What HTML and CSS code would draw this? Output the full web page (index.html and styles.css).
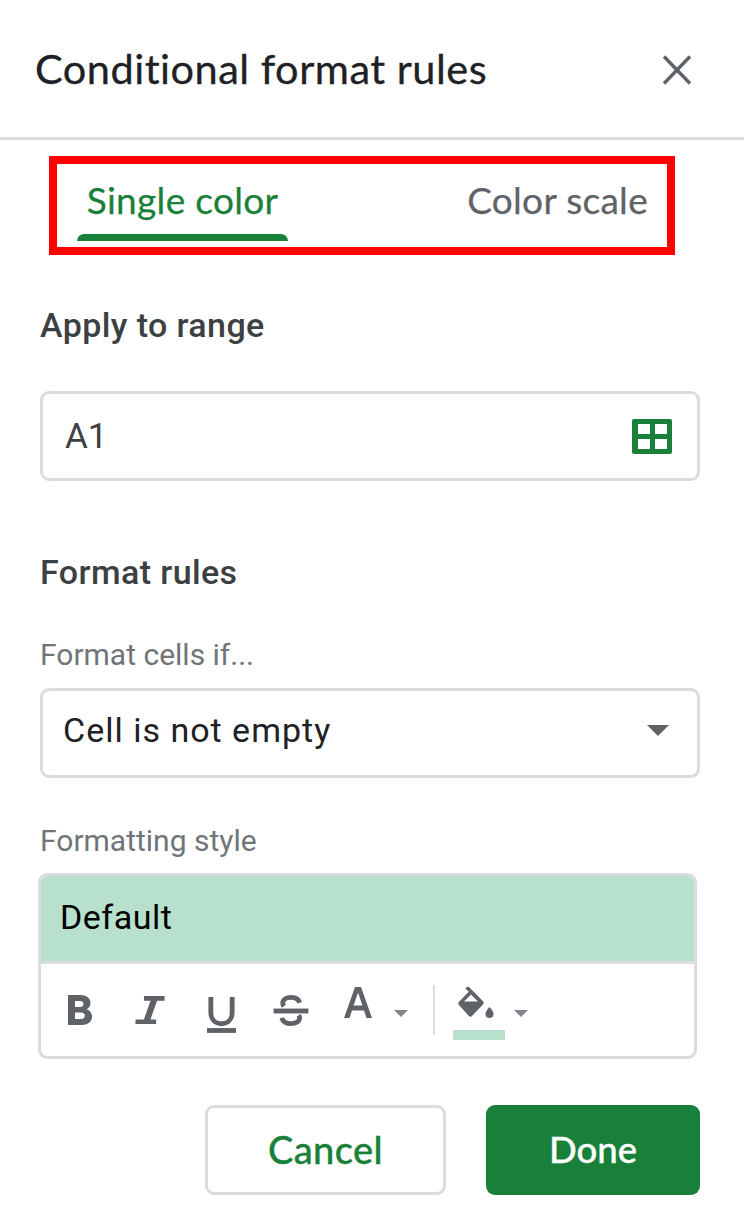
FILE: index.html
```html
<!DOCTYPE html>
<html lang="en">
<head>
<meta charset="utf-8">
<title>Conditional format rules</title>
<link rel="stylesheet" href="styles.css">
</head>
<body>
<div class="panel">
  <header class="header">
    <h1 class="title">Conditional format rules</h1>
    <svg class="close" viewBox="0 0 30 30" width="30" height="30"><path d="M2 1.5 15 15 28 1.5M2 28.500 15 15 28 28.500" fill="none" stroke="#5f6368" stroke-width="3.400"/></svg>
  </header>
  <nav class="tabs">
    <div class="tab active">Single color</div>
    <div class="tab">Color scale</div>
  </nav>
  <section class="body">
    <h2 class="heading first">Apply to range</h2>
    <div class="field range">
      <span class="range-value">A1</span>
      <svg viewBox="0 0 40 35" width="40" height="35"><path fill-rule="evenodd" d="M2 0h36a2 2 0 0 1 2 2v31a2 2 0 0 1-2 2H2a2 2 0 0 1-2-2V2a2 2 0 0 1 2-2zM6 5v10h12V5zM23 5v10h12V5zM6 20v10h12V20zM23 20v10h12V20z" fill="#188038"/></svg>
    </div>
    <h2 class="heading second">Format rules</h2>
    <div class="label cells-label">Format cells if...</div>
    <div class="field select">
      <span>Cell is not empty</span>
      <span class="select-arrow"></span>
    </div>
    <div class="label style-label">Formatting style</div>
    <div class="style-box">
      <div class="preview">Default</div>
      <div class="toolbar">
        <svg class="tool t-bold" viewBox="0 0 26 32" width="26" height="32"><path fill-rule="evenodd" d="M1 1h12.500c6 0 10 3 10 8 0 3-1.500 5.200-4 6.300 3.200 1 5.500 3.500 5.500 7.200 0 5.500-4.200 8.500-10.500 8.500H1zM8 7v6h5c2.200 0 3.500-1.100 3.500-3S15.200 7 13 7zM8 18.500V25h6c2.400 0 3.800-1.200 3.800-3.300S16.400 18.500 14 18.500z" fill="#5f6368"/></svg>
        <svg class="tool t-italic" viewBox="0 0 32 32" width="31" height="30"><path d="M9 1h22v5h-8l-7 20h6v5H0v-5h9l7-20H9z" fill="#5f6368"/></svg>
        <svg class="tool t-under" viewBox="0 0 32 38" width="31" height="37"><path d="M5 1v16c0 7 4.500 11.500 11 11.500S27 24 27 17V1" fill="none" stroke="#5f6368" stroke-width="5"/><rect x="1" y="33" width="30" height="5" fill="#5f6368"/></svg>
        <svg class="tool t-strike" viewBox="0 0 36 32" width="36" height="31"><path d="M27 8c-1-3.500-4.500-5.500-9-5.500-5 0-8.500 2.500-8.500 6 0 1.200.5 2.300 1.200 3.200M26 21c.6 1 .8 1.800.8 2.800 0 3.700-4 5.700-8.800 5.700-5 0-8.500-2.300-9.500-6" fill="none" stroke="#5f6368" stroke-width="5"/><rect x="0" y="14" width="36" height="5" fill="#5f6368"/></svg>
        <svg class="tool t-text" viewBox="0 0 28 31" width="28" height="31"><path fill-rule="evenodd" d="M11 0h6l11 31h-5.500l-2.500-7.500H8L5.500 31H0zM9.600 18.500h8.800L14 5.500z" fill="#5f6368"/></svg>
        <span class="mini-arrow"></span>
        <span class="divider"></span>
        <div class="fill">
          <svg viewBox="0 0 36 32" width="36" height="32"><path fill-rule="evenodd" d="M8.500 0h2.500l5 5 9 9.200c.9.900.9 2.300 0 3.200L14 29c-.9.900-2.300.900-3.200 0L1 18c-.9-.9-.9-2.300 0-3.200L10.800 4.800 7.500 1.800zM13 7.500 6 14.500h14z" fill="#5f6368"/><path d="M31.500 20s-4 3.800-4 7a4 4 0 0 0 8 0c0-3.200-4-7-4-7z" fill="#5f6368"/></svg>
          <span class="fill-bar"></span>
        </div>
        <span class="mini-arrow fill-arrow"></span>
      </div>
    </div>
    <div class="actions">
      <button class="btn cancel">Cancel</button>
      <button class="btn done">Done</button>
    </div>
  </section>
</div>
</body>
</html>
```
FILE: styles.css
```css
* { box-sizing: border-box; }
html, body { margin: 0; padding: 0; background: #fff; }
body { width: 744px; height: 1219px; overflow: hidden; font-family: Roboto, "Liberation Sans", sans-serif; }
.header { height: 140px; border-bottom: 3px solid #dadce0; display: flex; align-items: center; justify-content: space-between; padding: 0 52px 0 35px; }
.title { margin: 1px 0 0; font: 400 41.500px Lato, Roboto, sans-serif; letter-spacing: .5px; -webkit-text-stroke: .3px #202124; color: #202124; line-height: 1; }
.close { display: block; margin-top: 3px; }
.tabs { margin: 16px 0 0 49px; width: 626px; height: 99px; border: 8px solid #f00; display: flex; justify-content: space-between; padding: 0 19px 0 20px; }
.tab { font: 400 37px Lato, Roboto, sans-serif; letter-spacing: .3px; -webkit-text-stroke: .25px; color: #5f6368; padding-top: 13px; }
.tab.active { color: #188038; position: relative; width: 211px; text-align: center; }
.tab.active::after { content: ""; position: absolute; left: 0; right: 0; bottom: 6px; height: 7px; background: #188038; border-radius: 7px 7px 0 0; }
.body { padding: 0 44px 0 40px; }
.heading { margin: 0; font: 500 34px/38px Roboto, sans-serif; letter-spacing: .4px; color: #3c4043; }
.heading.first { margin-top: 51px; }
.heading.second { margin-top: 72px; }
.field { border: 3px solid #dadce0; border-radius: 9px; height: 90px; display: flex; align-items: center; justify-content: space-between; }
.range { margin-top: 47px; padding: 0 25px 0 22px; font-size: 35px; color: #3c4043; }
.range svg { display: block; }
.label { font: 400 30px/34px Roboto, sans-serif; color: #70757a; }
.cells-label { margin-top: 47px; }
.select { margin-top: 16px; padding: 0 28px 0 20px; font-size: 34px; line-height: 1; letter-spacing: 1px; color: #202124; }
.select > span:first-child { position: relative; top: -3px; }
.select-arrow { width: 0; height: 0; border: 11px solid transparent; border-top: 11px solid #5f6368; border-bottom: 0; position: relative; top: -3px; }
.style-label { margin-top: 46px; }
.style-box { margin: 15px 3px 0 -2px; height: 186px; border: 3px solid #dadce0; border-radius: 9px; overflow: hidden; }
.preview { height: 88px; background: #b7e1cd; border-bottom: 3px solid #dadce0; padding-left: 19px; font-size: 34px; line-height: 83px; letter-spacing: .5px; color: #000; }
.toolbar { display: flex; align-items: center; height: 92px; padding-left: 26px; }
.tool { display: block; flex: none; }
.t-italic { margin-left: 42px; }
.t-under { margin-left: 40px; position: relative; top: 4px; }
.t-strike { margin-left: 36px; }
.t-text { margin-left: 35px; position: relative; top: -8px; }
.mini-arrow { flex: none; width: 0; height: 0; border: 7px solid transparent; border-top: 7px solid #80868b; border-bottom: 0; margin: 7px 0 0 22px; }
.divider { flex: none; width: 2px; height: 50px; background: #dadce0; margin: 0 0 0 25px; }
.fill { flex: none; width: 52px; margin-left: 18px; display: flex; flex-direction: column; align-items: center; gap: 11px; padding-top: 6px; }
.fill svg { display: block; margin-right: 6px; }
.fill-bar { display: block; width: 52px; height: 10px; background: #b7e1cd; }
.fill-arrow { margin-left: 9px; }
.actions { display: flex; justify-content: flex-end; gap: 40px; margin-top: 46px; }
.btn { height: 90px; border-radius: 9px; font-family: Lato, Roboto, sans-serif; font-weight: 500; line-height: 1; padding: 0 0 2px; -webkit-text-stroke: .35px; }
.cancel { width: 241px; background: #fff; border: 3px solid #dadce0; color: #188038; font-size: 38px; letter-spacing: .4px; }
.done { width: 214px; background: #188038; border: 0; color: #fff; font-size: 36.500px; }
```
